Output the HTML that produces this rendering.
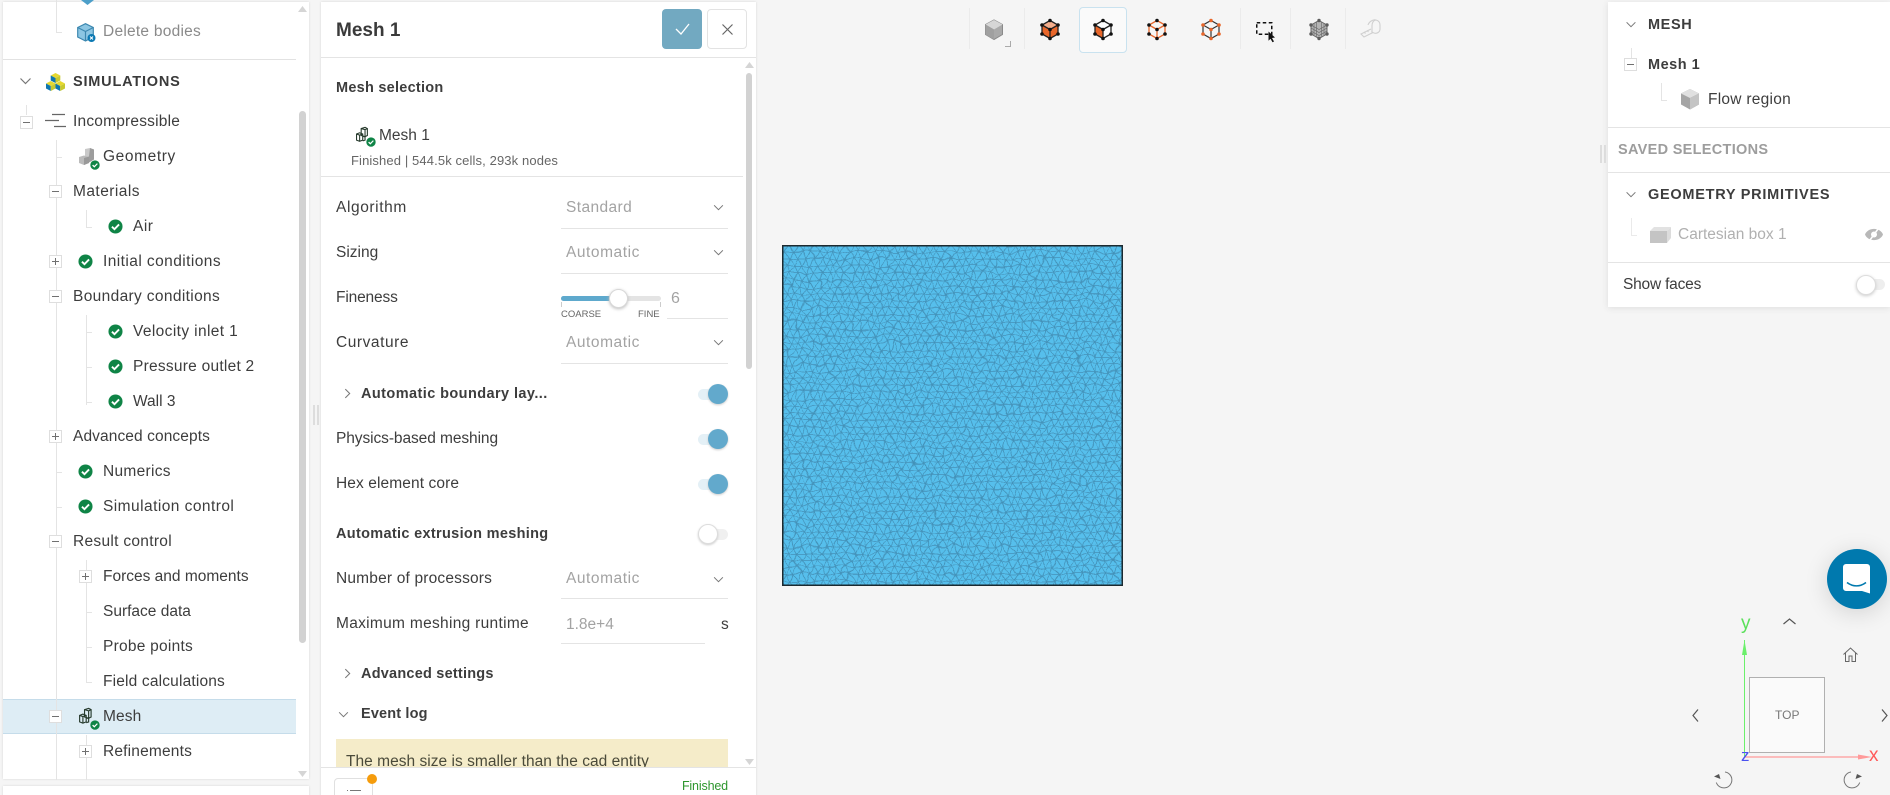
<!DOCTYPE html>
<html><head><meta charset="utf-8"><title>Mesh 1</title>
<style>
html,body{margin:0;padding:0;width:1890px;height:795px;overflow:hidden;background:#f5f5f5;font-family:"Liberation Sans",sans-serif;color:#3d3d3d}
*{box-sizing:border-box}
#root{position:absolute;left:0;top:0;width:1890px;height:795px;overflow:hidden;background:#f5f5f5}
.p{position:absolute;background:#fff}
.t{position:absolute;white-space:nowrap;font-size:15.5px;line-height:20px;height:20px;margin-top:1px}
.b{font-weight:bold;font-size:14.5px}
.g{color:#a3a3a3}
.l{position:absolute;background:#e4e4e4}
.box{position:absolute;width:13px;height:13px;border:1px solid #dedede;background:#fff}
.box:before{content:"";position:absolute;left:2px;right:2px;top:5px;height:1px;background:#707070}
.box.plus:after{content:"";position:absolute;top:2px;bottom:2px;left:5px;width:1px;background:#707070}
svg{position:absolute;overflow:visible}
.knob{position:absolute;border-radius:50%}
.tr{position:absolute;border-radius:6px;height:11px}
</style></head><body>
<div id="root">
<svg width="0" height="0" style="position:absolute"><defs>
<symbol id="ck" viewBox="0 0 16 16" overflow="visible"><circle cx="8" cy="8" r="7.5" fill="#0f8446"/><path d="M4.2 8.2l2.7 2.6 4.9-5" fill="none" stroke="#fff" stroke-width="2"/></symbol>
<symbol id="dn" viewBox="0 0 12 8" overflow="visible"><path d="M1 1.5l5 5 5-5" fill="none" stroke="#777" stroke-width="1.2"/></symbol>
<symbol id="rt" viewBox="0 0 8 12" overflow="visible"><path d="M1.5 1l5 5-5 5" fill="none" stroke="#777" stroke-width="1.2"/></symbol>
<symbol id="mi" viewBox="0 0 22 22" overflow="visible"><g fill="none" stroke="#263a2c" stroke-width="1.4"><path d="M8 2l5-1.500 3 1.500v9l-3 1.500-5-1.500zM8 2l5 1.500 3-1.500M13 3.500v9"/><path d="M2 9l4-1.500 4 1.500v8l-4 1.500-4-1.500zM2 9l4 1.500 4-1.500M6 10.500v8"/><path d="M10 12l3 1v4l-3 1"/></g></symbol>
<pattern id="m1" width="8" height="14" patternUnits="userSpaceOnUse"><rect width="8" height="14" fill="#56bfec"/><path d="M0 0h8M0 7h8M0 14h8M0 0l4 7 4-7M0 14l4-7 4 7" stroke="#4391b8" stroke-width=".7" fill="none"/></pattern>
<filter id="wob" x="-5%" y="-5%" width="110%" height="110%"><feTurbulence type="fractalNoise" baseFrequency=".06" numOctaves="2" seed="4"/><feDisplacementMap in="SourceGraphic" scale="9" xChannelSelector="R" yChannelSelector="G"/></filter>
</defs></svg>

<!-- LEFT PANEL -->
<div class="p" style="left:3px;top:2px;width:306px;height:777px;box-shadow:0 0 2px #d5d5d5"></div>
<div class="p" style="left:3px;top:786px;width:306px;height:12px;box-shadow:0 0 2px #d5d5d5"></div>
<div class="l" style="left:3px;top:59px;width:293px;height:1px;background:#e2e2e2"></div>
<div style="position:absolute;left:3px;top:699px;width:293px;height:35px;background:#deedf5;border-top:1px solid #c5dcea;border-bottom:1px solid #c5dcea"></div>
<!-- tree lines -->
<div class="l" style="left:26px;top:105px;width:1px;height:10px"></div>
<div class="l" style="left:56px;top:140px;width:1px;height:640px"></div>
<div class="l" style="left:56px;top:0;width:1px;height:33px"></div>
<div class="l" style="left:56px;top:32px;width:6px;height:1px"></div>
<div class="l" style="left:86px;top:210px;width:1px;height:18px"></div><div class="l" style="left:86px;top:227px;width:6px;height:1px"></div>
<div class="l" style="left:86px;top:315px;width:1px;height:90px"></div>
<div class="l" style="left:86px;top:560px;width:1px;height:122px"></div><div class="l" style="left:86px;top:682px;width:6px;height:1px"></div>
<div class="l" style="left:86px;top:735px;width:1px;height:45px"></div>
<div class="l" style="left:56px;top:157px;width:6px;height:1px"></div>
<div class="l" style="left:56px;top:472px;width:6px;height:1px"></div>
<div class="l" style="left:56px;top:507px;width:6px;height:1px"></div>
<div class="l" style="left:86px;top:332px;width:6px;height:1px"></div>
<div class="l" style="left:86px;top:367px;width:6px;height:1px"></div>
<div class="l" style="left:86px;top:402px;width:6px;height:1px"></div>
<div class="l" style="left:86px;top:612px;width:6px;height:1px"></div>
<div class="l" style="left:86px;top:647px;width:6px;height:1px"></div>
<!-- top cut icon -->
<svg style="left:81px;top:0" width="14" height="6"><path d="M0 0h13l-6.500 5z" fill="#4d9fc9"/></svg>
<!-- delete bodies icon -->
<svg style="left:77px;top:23px" width="20" height="20"><path d="M.7 4.500L8.500.7l7.800 3.800v9.500l-7.800 4-7.800-4z" fill="#8cc6e3" stroke="#3d88b0" stroke-width="1.200"/><path d="M.7 4.500L8.500 8.500l7.800-4M8.500 8.500v9.500" fill="none" stroke="#3d88b0" stroke-width="1.200"/><circle cx="14.500" cy="15" r="4" fill="#0b79b3"/><path d="M13 13.500l3 3M16 13.500l-3 3" stroke="#fff" stroke-width="1"/></svg>
<div class="t" style="left:103px;top:21px;color:#8a8a8a;letter-spacing:.25px">Delete bodies</div>
<svg style="left:19px;top:77px" width="13" height="8"><use href="#dn" width="13" height="8"/></svg>
<svg style="left:46px;top:73px" width="19" height="18"><g id="c3"><path d="M9.500 0l4.800 2.500-4.800 2.500-4.800-2.500z" fill="#e6d82f"/><path d="M4.700 2.500l4.800 2.500v5L4.700 7.500z" fill="#0f76b0"/><path d="M9.500 5l4.800-2.500v5L9.500 10z" fill="#c8c92e"/></g><path d="M4.800 8l4.700 2.500-4.700 2.500L0 10.500z" fill="#e6d82f"/><path d="M0 10.500L4.800 13v5L0 15.500z" fill="#0f76b0"/><path d="M4.800 13l4.700-2.500v5L4.800 18z" fill="#c8c92e"/><path d="M14.200 8l4.800 2.500L14.200 13l-4.700-2.500z" fill="#e6d82f"/><path d="M9.500 10.500l4.700 2.500v5l-4.700-2.500z" fill="#0f76b0"/><path d="M14.200 13l4.800-2.500v5L14.200 18z" fill="#c8c92e"/></svg>
<div class="t b" style="left:73px;top:71px;letter-spacing:.8px;color:#3a3a3a">SIMULATIONS</div>

<div class="box" style="left:20px;top:116px"></div>
<svg style="left:45px;top:113px" width="22" height="15"><path d="M7 1.500h13M0 7.500h14M9 13.500h12" stroke="#666" stroke-width="1.300"/></svg>
<div class="t" style="left:73px;top:111px;letter-spacing:.2px">Incompressible</div>

<svg style="left:78px;top:148px" width="22" height="22"><path d="M7 1l5-1 4 1.500v9l-9 0z" fill="#c9c9c9"/><path d="M1 9l5-1.500 5 1.500v6l-5 2-5-2z" fill="#bbb"/><path d="M12 0l4 1.500v10l-5 3V8z" fill="#9d9d9d"/><path d="M6 10l5-1.500v6.500l-5 2z" fill="#999"/></svg>
<svg style="left:90px;top:160px" width="10" height="10"><use href="#ck" width="10" height="10"/></svg>
<div class="t" style="left:103px;top:146px;letter-spacing:.6px">Geometry</div>

<div class="box" style="left:49px;top:185px"></div><div class="t" style="left:73px;top:181px;letter-spacing:.45px">Materials</div>
<svg style="left:108px;top:219px" width="15" height="15"><use href="#ck" width="15" height="15"/></svg><div class="t" style="left:133px;top:216px;letter-spacing:.5px">Air</div>
<div class="box plus" style="left:49px;top:255px"></div>
<svg style="left:78px;top:254px" width="15" height="15"><use href="#ck" width="15" height="15"/></svg><div class="t" style="left:103px;top:251px;letter-spacing:.43px">Initial conditions</div>
<div class="box" style="left:49px;top:290px"></div><div class="t" style="left:73px;top:286px;letter-spacing:.35px">Boundary conditions</div>
<svg style="left:108px;top:324px" width="15" height="15"><use href="#ck" width="15" height="15"/></svg><div class="t" style="left:133px;top:321px;letter-spacing:.38px">Velocity inlet 1</div>
<svg style="left:108px;top:359px" width="15" height="15"><use href="#ck" width="15" height="15"/></svg><div class="t" style="left:133px;top:356px;letter-spacing:.25px">Pressure outlet 2</div>
<svg style="left:108px;top:394px" width="15" height="15"><use href="#ck" width="15" height="15"/></svg><div class="t" style="left:133px;top:391px">Wall 3</div>
<div class="box plus" style="left:49px;top:430px"></div><div class="t" style="left:73px;top:426px;letter-spacing:.1px">Advanced concepts</div>
<svg style="left:78px;top:464px" width="15" height="15"><use href="#ck" width="15" height="15"/></svg><div class="t" style="left:103px;top:461px;letter-spacing:.3px">Numerics</div>
<svg style="left:78px;top:499px" width="15" height="15"><use href="#ck" width="15" height="15"/></svg><div class="t" style="left:103px;top:496px;letter-spacing:.45px">Simulation control</div>
<div class="box" style="left:49px;top:535px"></div><div class="t" style="left:73px;top:531px;letter-spacing:.3px">Result control</div>
<div class="box plus" style="left:79px;top:570px"></div><div class="t" style="left:103px;top:566px">Forces and moments</div>
<div class="t" style="left:103px;top:601px">Surface data</div>
<div class="t" style="left:103px;top:636px;letter-spacing:.25px">Probe points</div>
<div class="t" style="left:103px;top:671px;letter-spacing:.17px">Field calculations</div>
<div class="box" style="left:49px;top:710px"></div>
<svg style="left:78px;top:708px" width="18" height="18"><use href="#mi" width="18" height="18"/></svg>
<svg style="left:90px;top:720px" width="10" height="10"><use href="#ck" width="10" height="10"/></svg>
<div class="t" style="left:103px;top:706px;letter-spacing:.1px">Mesh</div>
<div class="box plus" style="left:79px;top:745px"></div><div class="t" style="left:103px;top:741px;letter-spacing:.18px">Refinements</div>
<div style="position:absolute;left:299px;top:111px;width:7px;height:532px;background:#d2d2d2;border-radius:4px"></div>
<svg style="left:298px;top:6px" width="9" height="6"><path d="M4.500 0L9 6H0z" fill="#d5d5d5"/></svg>
<svg style="left:298px;top:771px" width="9" height="6"><path d="M0 0h9L4.500 6z" fill="#d5d5d5"/></svg>
<div style="position:absolute;left:313px;top:405px;width:2px;height:20px;background:#ddd"></div>
<div style="position:absolute;left:317px;top:405px;width:2px;height:20px;background:#ddd"></div>

<!-- MIDDLE PANEL -->
<div class="p" style="left:321px;top:2px;width:435px;height:795px;box-shadow:0 0 2px #d5d5d5"></div>
<div class="t b" style="left:336px;top:17px;font-size:19px;line-height:26px;height:26px;color:#3a3a3a">Mesh 1</div>
<div style="position:absolute;left:662px;top:9px;width:40px;height:40px;background:#72a9c1;border-radius:4px"></div>
<svg style="left:675px;top:22px" width="15" height="13"><path d="M1 7l5 5L14 2" fill="none" stroke="#fff" stroke-width="1.300"/></svg>
<div style="position:absolute;left:707px;top:9px;width:40px;height:40px;background:#fff;border:1px solid #e3e3e3;border-radius:4px"></div>
<svg style="left:722px;top:24px" width="11" height="11"><path d="M.5.500l10 10M10.500.500l-10 10" stroke="#666" stroke-width="1.200"/></svg>
<div class="l" style="left:321px;top:57px;width:435px;height:1px"></div>
<div class="t b" style="left:336px;top:77px;letter-spacing:.25px">Mesh selection</div>
<svg style="left:355px;top:127px" width="17" height="17"><use href="#mi" width="17" height="17"/></svg>
<svg style="left:366px;top:137px" width="10" height="10"><use href="#ck" width="10" height="10"/></svg>
<div class="t" style="left:379px;top:125px">Mesh 1</div>
<div class="t" style="left:351px;top:150px;font-size:13px;color:#666;letter-spacing:.12px">Finished | 544.5k cells, 293k nodes</div>
<div class="l" style="left:321px;top:176px;width:422px;height:1px"></div>

<div class="t" style="left:336px;top:197px;letter-spacing:.6px">Algorithm</div><div class="t g" style="left:566px;top:197px;letter-spacing:.4px">Standard</div>
<svg style="left:713px;top:204px" width="11" height="7"><use href="#dn" width="11" height="7"/></svg><div class="l" style="left:561px;top:228px;width:167px;height:1px"></div>
<div class="t" style="left:336px;top:242px">Sizing</div><div class="t g" style="left:566px;top:242px;letter-spacing:.55px">Automatic</div>
<svg style="left:713px;top:249px" width="11" height="7"><use href="#dn" width="11" height="7"/></svg><div class="l" style="left:561px;top:273px;width:167px;height:1px"></div>
<div class="t" style="left:336px;top:287px;letter-spacing:-.15px">Fineness</div>
<div style="position:absolute;left:561px;top:296px;width:100px;height:5px;background:#e4e4e4;border-radius:3px"></div>
<div style="position:absolute;left:561px;top:296px;width:50px;height:5px;background:#5ea9cd;border-radius:3px"></div>
<div class="l" style="left:561px;top:302px;width:1px;height:5px;background:#ccc"></div><div class="l" style="left:660px;top:302px;width:1px;height:5px;background:#ccc"></div>
<div class="knob" style="left:609px;top:289px;width:19px;height:19px;background:#fff;border:1px solid #d8d8d8;box-shadow:0 1px 3px #bbb"></div>
<div class="t" style="left:561px;top:304px;font-size:9.500px;color:#666">COARSE</div>
<div class="t" style="left:638px;top:304px;font-size:9.500px;color:#666">FINE</div>
<div class="t g" style="left:671px;top:288px;font-size:16px">6</div><div class="l" style="left:667px;top:318px;width:61px;height:1px"></div>
<div class="t" style="left:336px;top:332px;letter-spacing:.55px">Curvature</div><div class="t g" style="left:566px;top:332px;letter-spacing:.55px">Automatic</div>
<svg style="left:713px;top:339px" width="11" height="7"><use href="#dn" width="11" height="7"/></svg><div class="l" style="left:561px;top:363px;width:167px;height:1px"></div>

<svg style="left:344px;top:388px" width="7" height="11"><use href="#rt" width="7" height="11"/></svg>
<div class="t b" style="left:361px;top:383px;letter-spacing:.42px">Automatic boundary lay...</div>
<div class="tr" style="left:698px;top:389px;width:28px;background:#e4f0f6"></div><div class="knob" style="left:708px;top:384px;width:20px;height:20px;background:#62a9cc;box-shadow:0 1px 2px #ccc"></div>
<div class="t" style="left:336px;top:428px;letter-spacing:-.08px">Physics-based meshing</div>
<div class="tr" style="left:698px;top:434px;width:28px;background:#e4f0f6"></div><div class="knob" style="left:708px;top:429px;width:20px;height:20px;background:#62a9cc;box-shadow:0 1px 2px #ccc"></div>
<div class="t" style="left:336px;top:473px;letter-spacing:.1px">Hex element core</div>
<div class="tr" style="left:698px;top:479px;width:28px;background:#e4f0f6"></div><div class="knob" style="left:708px;top:474px;width:20px;height:20px;background:#62a9cc;box-shadow:0 1px 2px #ccc"></div>
<div class="t b" style="left:336px;top:523px;letter-spacing:.32px">Automatic extrusion meshing</div>
<div class="tr" style="left:700px;top:529px;width:28px;background:#f0f0f0"></div><div class="knob" style="left:698px;top:524px;width:20px;height:20px;background:#fff;border:1px solid #ddd;box-shadow:0 1px 2px #ccc"></div>
<div class="t" style="left:336px;top:568px;letter-spacing:.18px">Number of processors</div><div class="t g" style="left:566px;top:568px;letter-spacing:.55px">Automatic</div>
<svg style="left:713px;top:576px" width="11" height="7"><use href="#dn" width="11" height="7"/></svg><div class="l" style="left:561px;top:598px;width:167px;height:1px"></div>
<div class="t" style="left:336px;top:613px;letter-spacing:.3px">Maximum meshing runtime</div><div class="t g" style="left:566px;top:614px">1.8e+4</div>
<div class="t" style="left:721px;top:614px">s</div><div class="l" style="left:561px;top:643px;width:144px;height:1px"></div>
<svg style="left:344px;top:668px" width="7" height="11"><use href="#rt" width="7" height="11"/></svg>
<div class="t b" style="left:361px;top:663px;letter-spacing:.22px">Advanced settings</div>
<svg style="left:338px;top:711px" width="11" height="7"><use href="#dn" width="11" height="7"/></svg>
<div class="t b" style="left:361px;top:703px;letter-spacing:.15px">Event log</div>
<div style="position:absolute;left:336px;top:739px;width:392px;height:28px;background:#f5ecc9;overflow:hidden"><div class="t" style="left:10px;top:12px;color:#4a4a3a;letter-spacing:.03px">The mesh size is smaller than the cad entity</div></div>
<div style="position:absolute;left:321px;top:767px;width:435px;height:30px;background:#fff;border-top:1px solid #e4e4e4"></div>
<div style="position:absolute;left:334px;top:778px;width:39px;height:30px;border:1px solid #e0e0e0;border-radius:4px;background:#fff"></div>
<svg style="left:346px;top:790px" width="16" height="5"><path d="M1 .500h1M4 .500h11" stroke="#777"/></svg>
<div class="knob" style="left:367px;top:774px;width:10px;height:10px;background:#f59c0c"></div>
<div class="t" style="left:648px;top:775px;width:80px;text-align:right;font-size:12.5px;color:#2d962d;letter-spacing:-.15px">Finished</div>
<div style="position:absolute;left:746px;top:73px;width:6px;height:296px;background:#d2d2d2;border-radius:3px"></div>
<svg style="left:745px;top:62px" width="9" height="6"><path d="M4.500 0L9 6H0z" fill="#d5d5d5"/></svg>
<svg style="left:745px;top:759px" width="9" height="6"><path d="M0 0h9L4.500 6z" fill="#d5d5d5"/></svg>

<!-- MESH VIEW -->
<svg style="left:782px;top:245px;overflow:hidden" width="341" height="341"><rect x="-20" y="-20" width="381" height="381" fill="url(#m1)" filter="url(#wob)"/><rect x=".75" y=".75" width="339.500" height="339.500" fill="none" stroke="#1c2a30" stroke-width="1.500"/></svg>

<!-- TOOLBAR -->
<div class="l" style="left:969px;top:8px;width:1px;height:41px;background:#ebebeb"></div>
<div class="l" style="left:1024px;top:8px;width:1px;height:41px;background:#ebebeb"></div>
<div class="l" style="left:1240px;top:8px;width:1px;height:41px;background:#ebebeb"></div>
<div class="l" style="left:1290px;top:8px;width:1px;height:41px;background:#ebebeb"></div>
<div class="l" style="left:1345px;top:8px;width:1px;height:41px;background:#ebebeb"></div>
<div style="position:absolute;left:1079px;top:7px;width:48px;height:46px;background:#fafafa;border:1px solid #c9e2ef;border-radius:4px"></div>
<svg style="left:985px;top:20px" width="18" height="20"><path d="M9 0l8.500 4.500v10L9 19.500.5 14.500v-10z" fill="#a9a9a9" stroke="#8a8a8a"/><path d="M9 0l8.500 4.500L9 9.500.5 4.500z" fill="#d6d6d6"/><path d="M9 9.500v10L.5 14.500v-10z" fill="#a0a0a0"/></svg>
<svg style="left:1005px;top:41px" width="6" height="6"><path d="M0 5.500h5.500V0" fill="none" stroke="#aaa"/></svg>
<!-- solid -->
<svg style="left:1040px;top:19px" width="20" height="21"><g transform="translate(10,10.500)"><path d="M0-9l8 4.500v9L0 9l-8-4.500v-9z" fill="#e8662a"/><path d="M0-9l8 4.500L0 0l-8-4.500z" fill="#f5ae8c"/><path d="M0-9l8 4.500v9L0 9l-8-4.500v-9zM0 0l8-4.500M0 0l-8-4.500M0 0v9" fill="none" stroke="#222" stroke-width="1.300"/><g fill="#111"><circle cy="-9" r="1.800"/><circle cx="8" cy="-4.500" r="1.800"/><circle cx="8" cy="4.500" r="1.800"/><circle cy="9" r="1.800"/><circle cx="-8" cy="4.500" r="1.800"/><circle cx="-8" cy="-4.500" r="1.800"/><circle r="1.800"/></g></g></svg>
<!-- one face -->
<svg style="left:1093px;top:19px" width="20" height="21"><g transform="translate(10,10.500)"><path d="M0-9l8 4.500v9L0 9l-8-4.500v-9z" fill="#fff"/><path d="M0 0v9l-8-4.500v-9z" fill="#e8662a"/><path d="M0-9l8 4.500v9L0 9l-8-4.500v-9zM0 0l8-4.500M0 0l-8-4.500M0 0v9" fill="none" stroke="#222" stroke-width="1.300"/><g fill="#111"><circle cy="-9" r="1.800"/><circle cx="8" cy="-4.500" r="1.800"/><circle cx="8" cy="4.500" r="1.800"/><circle cy="9" r="1.800"/><circle cx="-8" cy="4.500" r="1.800"/><circle cx="-8" cy="-4.500" r="1.800"/><circle r="1.800"/></g></g></svg>
<!-- edges orange -->
<svg style="left:1147px;top:19px" width="20" height="21"><g transform="translate(10,10.500)"><path d="M0-9l8 4.500v9L0 9l-8-4.500v-9zM0 0l8-4.500M0 0l-8-4.500M0 0v9" fill="none" stroke="#e8662a" stroke-width="1.300"/><g fill="#111"><circle cy="-9" r="1.800"/><circle cx="8" cy="-4.500" r="1.800"/><circle cx="8" cy="4.500" r="1.800"/><circle cy="9" r="1.800"/><circle cx="-8" cy="4.500" r="1.800"/><circle cx="-8" cy="-4.500" r="1.800"/><circle r="1.800"/></g></g></svg>
<!-- vertices orange -->
<svg style="left:1201px;top:19px" width="20" height="21"><g transform="translate(10,10.500)"><path d="M0-9l8 4.500v9L0 9l-8-4.500v-9zM0 0l8-4.500M0 0l-8-4.500M0 0v9" fill="none" stroke="#333" stroke-width="1.200"/><g fill="#e8662a"><circle cy="-9" r="1.800"/><circle cx="8" cy="-4.500" r="1.800"/><circle cx="8" cy="4.500" r="1.800"/><circle cy="9" r="1.800"/><circle cx="-8" cy="4.500" r="1.800"/><circle cx="-8" cy="-4.500" r="1.800"/><circle r="1.800"/></g></g></svg>
<!-- selection -->
<svg style="left:1256px;top:22px" width="20" height="20"><rect x=".75" y=".75" width="15" height="11.500" fill="none" stroke="#111" stroke-width="1.500" stroke-dasharray="3.500 2.500"/><path d="M12.500 9.500l6.500 6-3 .500 2 3.500-1.500.800-2-3.500-2 2z" fill="#111"/></svg>
<!-- mesh gray cube -->
<svg style="left:1309px;top:19px" width="20" height="21"><g transform="translate(10,10.500)"><path d="M0-9l8 4.500v9L0 9l-8-4.500v-9z" fill="#b4b4b4"/><path d="M-5-6.500v12M-2.500-7.500v14.500M2.500-7.500v14.500M5-6.500v12M-8-1.500l8 4.500L8-1.500M-8 1.500l8 4.500L8 1.500M-8-4.500L0 0l8-4.500" stroke="#666" stroke-width=".6" fill="none"/><path d="M0-9l8 4.500v9L0 9l-8-4.500v-9z" fill="none" stroke="#666" stroke-width="1"/><g fill="#5c5c5c"><circle cy="-9" r="1.700"/><circle cx="8" cy="-4.500" r="1.700"/><circle cx="8" cy="4.500" r="1.700"/><circle cy="9" r="1.700"/><circle cx="-8" cy="4.500" r="1.700"/><circle cx="-8" cy="-4.500" r="1.700"/></g></g></svg>
<!-- tape -->
<svg style="left:1360px;top:19px" width="21" height="21"><g fill="none" stroke="#cfcfcf" stroke-width="1.100"><path d="M8 6c1-3 5-6 8-5 3 .800 4 3 4 5v4c0 3-3 5-6 4-1-.300-2-.800-2.500-1.500"/><path d="M16 1c-3 .500-4 3-4 6v6"/><path d="M11 10L1 15l3 3 9-4.500"/><path d="M4 13l1.500 1.500M7 11.500l1.500 1.500"/></g></svg>

<!-- RIGHT PANEL -->
<div style="position:absolute;left:1600px;top:145px;width:2px;height:18px;background:#ddd"></div>
<div style="position:absolute;left:1604px;top:145px;width:2px;height:18px;background:#ddd"></div>
<div class="p" style="left:1608px;top:2px;width:282px;height:305px;box-shadow:0 1px 6px #ddd"></div>
<svg style="left:1625px;top:21px" width="12" height="7"><use href="#dn" width="12" height="7"/></svg>
<div class="t b" style="left:1648px;top:14px;letter-spacing:.6px">MESH</div>
<div class="l" style="left:1631px;top:48px;width:1px;height:10px"></div>
<div class="box" style="left:1624px;top:58px"></div>
<div class="t b" style="left:1648px;top:54px;letter-spacing:.5px">Mesh 1</div>
<div class="l" style="left:1661px;top:83px;width:1px;height:17px"></div><div class="l" style="left:1661px;top:100px;width:6px;height:1px"></div>
<svg style="left:1681px;top:89px" width="18" height="21"><path d="M9 0l9 4.500v11L9 20.500 0 15.500v-11z" fill="#a5a5a5"/><path d="M9 0l9 4.500L9 9 0 4.500z" fill="#e0e0e0"/><path d="M9 9l9-4.500v11L9 20.500z" fill="#c4c4c4"/></svg>
<div class="t" style="left:1708px;top:89px;letter-spacing:.26px">Flow region</div>
<div class="l" style="left:1608px;top:127px;width:282px;height:1px"></div>
<div class="t b" style="left:1618px;top:139px;letter-spacing:.3px;color:#9d9d9d">SAVED SELECTIONS</div>
<div class="l" style="left:1608px;top:172px;width:282px;height:1px"></div>
<svg style="left:1625px;top:191px" width="12" height="7"><use href="#dn" width="12" height="7"/></svg>
<div class="t b" style="left:1648px;top:184px;letter-spacing:.73px">GEOMETRY PRIMITIVES</div>
<div class="l" style="left:1631px;top:218px;width:1px;height:17px;background:#eaeaea"></div><div class="l" style="left:1631px;top:235px;width:6px;height:1px;background:#eaeaea"></div>
<svg style="left:1650px;top:226px" width="21" height="17"><path d="M0 5l4-4h17l-4 4z" fill="#e2e2e2"/><path d="M0 5h17v12H0z" fill="#c4c4c4"/><path d="M17 5l4-4v11l-4 5z" fill="#dcdcdc"/></svg>
<div class="t" style="left:1678px;top:224px;color:#b0b0b0">Cartesian box 1</div>
<svg style="left:1865px;top:228px" width="18" height="13"><path d="M0 6.500C3-1 15-1 18 6.500 15 14 3 14 0 6.500z" fill="#b8b8b8"/><circle cx="9" cy="6.500" r="3" fill="#fff"/><path d="M13 1L5 12" stroke="#fff" stroke-width="1.500"/></svg>
<div class="l" style="left:1608px;top:262px;width:282px;height:1px"></div>
<div class="t" style="left:1623px;top:274px;letter-spacing:-.2px">Show faces</div>
<div class="tr" style="left:1860px;top:279px;width:25px;background:#eee"></div><div class="knob" style="left:1856px;top:275px;width:20px;height:20px;background:#fff;border:1px solid #ddd;box-shadow:0 1px 3px #ccc"></div>

<!-- CHAT -->
<div class="knob" style="left:1827px;top:549px;width:60px;height:60px;background:#0079ae;box-shadow:0 4px 24px rgba(0,0,0,.14)"></div>
<svg style="left:1843px;top:564px" width="28" height="30"><path d="M3 0h21a3 3 0 0 1 3 3v26.500l-8-2.500H3a3 3 0 0 1-3-3V3a3 3 0 0 1 3-3z" fill="#fff"/><path d="M4 18.500c6 4.500 13 4.500 19 0" fill="none" stroke="#0079ae" stroke-width="1.600"/></svg>

<!-- NAV CUBE -->
<div style="position:absolute;left:1749px;top:677px;width:76px;height:76px;background:#fafafa;border:1px solid #b0b0b0"></div>
<div class="t" style="left:1775px;top:704px;font-size:12px;color:#777">TOP</div>
<svg style="left:1735px;top:615px" width="150" height="155"><path d="M9.500 25V142" stroke="#6bf06b" stroke-width="1"/><path d="M9.500 25l-2.500 15h5z" fill="#6bf06b"/><path d="M9 142H125" stroke="#ff9a9a" stroke-width="1.200"/><path d="M137 142l-14-2.500v5z" fill="#ff9a9a"/></svg>
<div class="t" style="left:1741px;top:613px;font-size:19px;color:#5be05b">y</div>
<div class="t" style="left:1869px;top:745px;font-size:19px;color:#ff5a5a">x</div>
<div class="t" style="left:1741px;top:745px;font-size:17px;color:#4a52f0">z</div>
<svg style="left:1783px;top:618px" width="13" height="7"><path d="M.5 6l6-5 6 5" fill="none" stroke="#555" stroke-width="1.200"/></svg>
<svg style="left:1692px;top:709px" width="7" height="13"><path d="M6 .5L1 6.500l5 6" fill="none" stroke="#555" stroke-width="1.200"/></svg>
<svg style="left:1881px;top:709px" width="7" height="13"><path d="M1 .5l5 6-5 6" fill="none" stroke="#555" stroke-width="1.200"/></svg>
<svg style="left:1843px;top:647px" width="15" height="15"><path d="M.5 7.500L7.500 1l7 6.500M2.500 6v8.500h3.500V9h3v5.500h3.500V6" fill="none" stroke="#666" stroke-width="1"/></svg>
<svg style="left:1714px;top:770px" width="20" height="20"><path d="M11 2A8 8 0 1 1 2.300 12.500" fill="none" stroke="#777" stroke-width="1"/><path d="M0 6.500l5-2.500 1.500 5z" fill="#555"/></svg>
<svg style="left:1842px;top:770px" width="20" height="20"><path d="M9 2A8 8 0 1 0 17.700 12.500" fill="none" stroke="#777" stroke-width="1"/><path d="M20 6.500l-5-2.500-1.500 5z" fill="#555"/></svg>
</div>
</body></html>
